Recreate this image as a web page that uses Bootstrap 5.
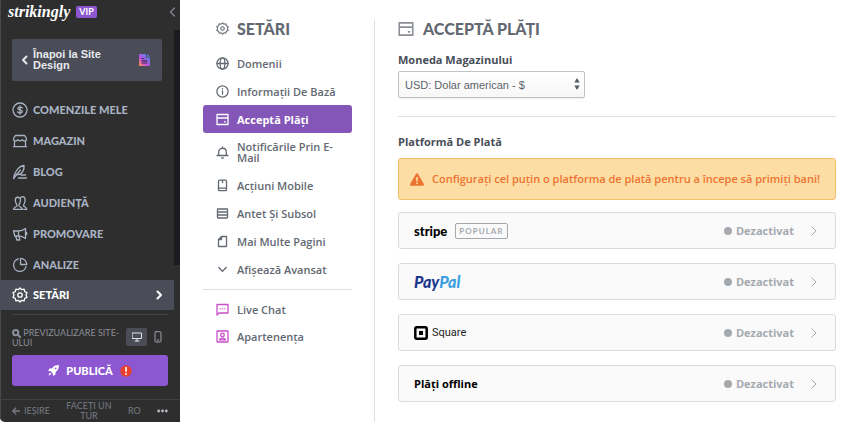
<!DOCTYPE html>
<html lang="ro">
<head>
<meta charset="utf-8">
<meta name="viewport" content="width=device-width, initial-scale=1">
<title>Setări – Acceptă plăți</title>
<link href="https://cdn.jsdelivr.net/npm/bootstrap@5.3.0/dist/css/bootstrap.min.css" rel="stylesheet">
<style>
body{font-family:"Open Sans","Noto Sans",sans-serif;font-size:11px;line-height:14px;color:#636972;background:#fff}
a{color:inherit;text-decoration:none}
svg{display:block;flex:none;fill:none;stroke:currentColor;stroke-width:1.3;stroke-linecap:round;stroke-linejoin:round}
.solid{stroke:none}
.heavy{stroke-width:2}
.thin{stroke-width:1}
.side{width:180px;background:#2e2e2e;color:#a9b3c3;font-family:Lato,sans-serif;border-bottom-left-radius:5px;box-shadow:inset 1px 0 #484848}
.brand{height:30px;padding:0 4px 6px 8px;gap:6px}
.brand svg{color:#858992}
.brand-name{font:italic bold 16px/20px "Liberation Serif",serif;color:#fff}
.vip{background:#8d57d1;color:#fff;font-size:9px;line-height:12px;font-weight:700;border-radius:2px;padding:0 3px}
.side-scroll{border-right:6px solid #1a1b1f;height:235px}
.back{margin:9px 12px 13px;width:150px;height:42px;background:#4a4d57;color:#e7e9ee;border:0;border-radius:2px;padding:0 12px 0 9px;font:bold 11px/11px "Liberation Sans",sans-serif;gap:5px}
.side-link{height:31px;padding-left:12px;gap:5px;font-size:11px;font-weight:900;width:174px}
.side-link.current{background:#4a4d57;color:#fff;height:30px;padding-right:11px}
.side-icon{width:16px;height:16px}
.preview{margin:0 12px;border-top:1px solid #41434a;padding-top:13px;height:41px;font-size:9px;line-height:10px;color:#8a8f9a}
.dev{border:0;background:none;color:#9ba0aa;width:21px;height:18px;padding:0;border-radius:2px}
.dev.on{background:#4a4d57;color:#e2e4e8}
.publish{margin:0 12px;width:156px;height:31px;background:#8d57d1;color:#fff;border:0;border-radius:3px;font-size:11px;font-weight:900;gap:7px}
.side-foot{margin-top:13px;border-top:1px solid #414141;height:23px;padding:0 12px;color:#777b84;font-size:9px;line-height:10px}
.menu{width:195px;margin-top:20px;padding:0 22px 0 23px;border-right:1px solid #dcdfe3}
.ttl{font-family:Lato,sans-serif;font-weight:900;font-size:16px;line-height:17px;color:#636972;margin:0}
.menu .ttl{padding-left:13px;gap:8px;margin-bottom:12px}
.main .ttl{gap:9px}
.menu-link{min-height:28px;padding:2px 13px;gap:8px;font-weight:600;line-height:11px}
.menu-extra .menu-link{min-height:27px}
.menu-link svg{width:13px;height:13px}
.menu-link.current{background:#8456b8;color:#fff;border-radius:3px;font-weight:700}
.rule{border:0;border-top:1px solid #dcdfe3;opacity:1;margin:0}
.menu .rule{margin:6px 0}
.pink{color:#c94fc8}
.main{padding:20px 19px 19px 23px;min-width:0}
.main .rule{margin:18px 0}
.lbl{font-weight:700;color:#484e58;font-size:11px;line-height:14px}
.money{width:187px;height:27px;border:1px solid #bfc3c8;border-radius:2px;background:linear-gradient(#fff,#f7f7f7);color:#5c626c;font:11px "Liberation Sans",sans-serif;padding:0 18px 0 6px;appearance:none;box-shadow:0 1px 1px #0001}
.money-arrows{position:absolute;right:5px;top:7px;pointer-events:none;stroke:none;fill:#555b65}
.warn{background:#fcdda4;border:1px solid #f5bd6b;border-radius:3px;color:#ed7430;min-height:42px;padding:0 11px;gap:8px;font-weight:600;margin-top:9px}
.providers{gap:14px;margin-top:12px}
.go{margin-left:17px;stroke-width:1}
.pay{height:37px;background:#fafafa;border:1px solid #dadbdd;border-radius:3px;padding:0 18px 0 15px;color:#a4a9af;font-weight:700}
.dot{width:8px;height:8px;border-radius:50%;background:#a4a9af}
.tag{border:1px solid #a4a9af;border-radius:2px;font-family:Lato,sans-serif;font-size:8px;letter-spacing:1px;line-height:14px;padding:0 3px}
.stripe{font:900 13px/16px Lato,sans-serif;color:#000}
.paypal{font:italic 900 16px/18px Lato,sans-serif;color:#1c388c}
.paypal span{color:#3d9fe0}
.square{font:11px/14px Roboto,sans-serif;color:#222}
.square-logo{stroke:#000}
</style>
</head>
<body>
<div class="d-flex min-vh-100">
<aside class="side d-flex flex-column flex-shrink-0">
  <div class="brand d-flex align-items-center">
    <span class="brand-name">strikingly</span><span class="vip">VIP</span>
    <svg class="ms-auto" width="7" height="10" viewBox="0 0 7 10"><path d="M5.500 1 1.500 5l4 4"/></svg>
  </div>
  <div class="side-scroll">
    <button class="back d-flex align-items-center text-start">
      <svg class="heavy" width="7" height="10" viewBox="0 0 7 10"><path d="M5.500 1.500 2 5l3.500 3.500"/></svg>
      <span>Înapoi la Site<br>Design</span>
      <svg class="ms-auto solid" width="11" height="12" viewBox="0 0 11 12"><defs><linearGradient id="pg" x1="0" y1="1" x2="1" y2="0"><stop offset="0" stop-color="#ff9345"/><stop offset=".4" stop-color="#c34de0"/><stop offset="1" stop-color="#2d9bf0"/></linearGradient></defs><path fill="url(#pg)" d="M0 0h7v3.700h4V12H0zM8 0l3 2.700H8z"/><path stroke="#3c3154" stroke-width="1.200" d="M3 4.500h2M3 6.800h5M3 9h5"/></svg>
    </button>
    <nav>
      <a href="#" class="side-link d-flex align-items-center"><svg class="side-icon" viewBox="0 0 16 16"><circle cx="8" cy="8" r="7"/><path d="M10.300 6C9.800 5 6 4.600 5.900 6.400 5.900 8.300 10.300 7.500 10.300 9.500c0 2-4 1.700-4.700.4M8 3.800v8.400"/></svg>COMENZILE MELE</a>
      <a href="#" class="side-link d-flex align-items-center"><svg class="side-icon" viewBox="0 0 16 16"><path d="M3.500 2.500h9c1.200 1 2 2.500 2 4.300-1.200 1.500-3 1.500-4.300 0-1.300 1.500-3 1.500-4.300 0-1.300 1.500-3.300 1.500-4.400 0 0-1.800.8-3.300 2-4.300zM2.500 8.500v5.200M13.500 8.500v5.200M1.500 13.700h13"/></svg>MAGAZIN</a>
      <a href="#" class="side-link d-flex align-items-center"><svg class="side-icon" viewBox="0 0 16 16"><path d="M1.500 14.500C2.500 8.500 6 2.500 12 1.500c.5 4-1.500 8-5 9.200l-3-.4M1.500 14.500 8.500 6M9 11h4.500M6.500 14h8"/></svg>BLOG</a>
      <a href="#" class="side-link d-flex align-items-center"><svg class="side-icon" viewBox="0 0 16 16"><path d="M1.500 14.300c0-2 3-2.500 3.500-3.300C5.400 9.600 3.300 8.500 3.300 5c0-3.600 5.200-3.700 5.200 0 0 3.500-2.200 4.500-1.500 6 .5 1 3.500 1.300 3.500 3.300zM8.500 2.600c2-2 4.700-.6 4.700 2.200 0 3.500-2 4.700-1.600 5.900.3 1 3 1.300 3.200 3.600h-3"/></svg>AUDIENȚĂ</a>
      <a href="#" class="side-link d-flex align-items-center"><svg class="side-icon" viewBox="0 0 16 16"><path d="M1.500 5h5c3 0 5-1 7-2.500v10C11.500 11 9.500 10 6.500 10H2.800zM6.500 5v5M3.700 10l1.100 4h3l-.9-3.800M14.600 6.500v2"/></svg>PROMOVARE</a>
      <a href="#" class="side-link d-flex align-items-center"><svg class="side-icon" viewBox="0 0 16 16"><path d="M6.300 2A6.300 6.300 0 1 0 14 9.700M8.500 1.300v6.200h6.200c0-3.500-2.700-6.200-6.200-6.200z"/></svg>ANALIZE</a>
      <a href="#" class="side-link current d-flex align-items-center" aria-current="page"><svg class="side-icon" viewBox="0 0 16 16"><path id="gear" d="M8 1l1.700 1.700 2.400-.5.600 2.400 2.300.9L14 8l1 2.500-2.300.9-.6 2.400-2.400-.5L8 15l-1.700-1.700-2.400.5-.6-2.400L1 10.500 2 8 1 5.500l2.300-.9.600-2.400 2.400.5z"/><circle cx="8" cy="8" r="2.200"/></svg>SETĂRI<svg class="ms-auto heavy" width="7" height="10" viewBox="0 0 7 10"><path d="M1.500 1.500 5 5 1.500 8.500"/></svg></a>
    </nav>
  </div>
  <div class="mt-auto">
  <div class="preview d-flex align-items-start">
    <span class="flex-grow-1"><svg class="d-inline-block heavy" width="9" height="9" viewBox="0 0 9 9"><circle cx="3.700" cy="3.700" r="2.600"/><path d="m6 6 2.300 2.300"/></svg> PREVIZUALIZARE SITE-ULUI</span>
    <button class="dev on d-flex align-items-center justify-content-center flex-shrink-0" aria-label="Desktop"><svg class="thin" width="10" height="10" viewBox="0 0 10 10"><path d="M.5 1h9v5.500h-9zM5 6.500V9M3 9h4"/></svg></button>
    <button class="dev d-flex align-items-center justify-content-center flex-shrink-0" aria-label="Mobil"><svg class="thin" width="8" height="12" viewBox="0 0 8 12"><rect x="1" y=".7" width="6" height="10.300" rx="1"/><path d="M3.300 9h1.400"/></svg></button>
  </div>
  <button class="publish d-flex align-items-center justify-content-center"><svg class="solid" width="11" height="11" viewBox="0 0 11 11"><path fill="#fff" d="M11 0C7.500 0 5.500 1.200 4.200 3.200L1.600 3.600 0 6l2.300.1 2.600 2.600L5 11l2.400-1.600.4-2.600C9.800 5.500 11 3.500 11 0zM1.700 7.500.5 10.500l3-1.200z"/><circle cx="7.600" cy="3.400" r=".9" fill="#8d57d1"/></svg>PUBLICĂ<svg class="solid" width="12" height="12" viewBox="0 0 12 12"><circle cx="6" cy="6" r="5.700" fill="#e8402c"/><path d="M5.200 2h1.600v4.800H5.200zM5.200 8h1.600v1.700H5.200z" fill="#fff"/></svg></button>
  <footer class="side-foot d-flex align-items-center justify-content-between text-center">
    <a href="#" class="d-flex align-items-center gap-1"><svg width="8" height="8" viewBox="0 0 8 8"><path d="M7.500 4H1M3.800 1 .8 4l3 3"/></svg>IEȘIRE</a>
    <a href="#">FACEȚI UN<br>TUR</a><a href="#">RO</a>
    <a href="#" aria-label="Mai multe"><svg class="solid" width="11" height="4" viewBox="0 0 11 4"><g fill="#b6bbc4"><circle cx="1.700" cy="2" r="1.400"/><circle cx="5.500" cy="2" r="1.400"/><circle cx="9.300" cy="2" r="1.400"/></g></svg></a>
  </footer>
  </div>
</aside>

<section class="menu flex-shrink-0">
  <h2 class="ttl d-flex align-items-center"><svg width="13" height="13" viewBox="0 0 16 16"><use href="#gear"/><circle cx="8" cy="8" r="2.200"/></svg>SETĂRI</h2>
  <nav>
    <a href="#" class="menu-link d-flex align-items-center"><svg viewBox="0 0 13 13"><circle cx="6.500" cy="6.500" r="5.600"/><ellipse cx="6.500" cy="6.500" rx="2.400" ry="5.600"/><path d="M1 6.500h11"/></svg>Domenii</a>
    <a href="#" class="menu-link d-flex align-items-center"><svg viewBox="0 0 13 13"><circle cx="6.500" cy="6.500" r="5.600"/><path d="M6.500 6v3.200M6.500 3.700v.2"/></svg>Informații De Bază</a>
    <a href="#" class="menu-link current d-flex align-items-center" aria-current="page"><svg viewBox="0 0 13 13"><path id="card" d="M1 1.500h11v10H1zM1 5h11M8.500 8.800h1"/></svg>Acceptă Plăți</a>
    <a href="#" class="menu-link d-flex align-items-center py-2"><svg viewBox="0 0 13 13"><path d="M1 9.500h11M2.700 9.500V6c0-5 7.600-5 7.600 0v3.500M6.500 2V1M5.700 12h1.600"/></svg><span>Notificările Prin E-Mail</span></a>
    <a href="#" class="menu-link d-flex align-items-center"><svg viewBox="0 0 13 13"><rect x="2.500" y="1.200" width="8" height="10.500" rx="1"/><path d="M2.500 9.200h8M6.500 1.500v2"/></svg>Acțiuni Mobile</a>
    <a href="#" class="menu-link d-flex align-items-center"><svg viewBox="0 0 13 13"><rect x="1.500" y="2" width="10" height="9" rx=".5"/><path d="M1.500 5h10M1.500 8h10"/></svg>Antet Și Subsol</a>
    <a href="#" class="menu-link d-flex align-items-center"><svg viewBox="0 0 13 13"><path d="M5.500 1.500h5v10h-8v-7zv3h-3"/></svg>Mai Multe Pagini</a>
    <a href="#" class="menu-link d-flex align-items-center"><svg viewBox="0 0 13 13"><path d="m2.800 4.500 3.700 3.700 3.700-3.700"/></svg>Afișează Avansat</a>
  </nav>
  <hr class="rule">
  <nav class="menu-extra">
    <a href="#" class="menu-link d-flex align-items-center"><svg class="pink" viewBox="0 0 13 13"><path d="M1 1.500h11v8.500H3L1 12zM4 5.800h.2M6.400 5.800h.2M8.800 5.800H9"/></svg>Live Chat</a>
    <a href="#" class="menu-link d-flex align-items-center"><svg class="pink" viewBox="0 0 13 13"><rect x="1" y="1" width="11" height="11" rx=".5"/><circle cx="6.500" cy="5" r="1.800"/><path d="M3.500 9.800c1-2.200 5-2.200 6 0z"/></svg>Apartenența</a>
  </nav>
</section>

<main class="main flex-grow-1">
  <h1 class="ttl d-flex align-items-center mb-3"><svg width="16" height="16" viewBox="0 0 13 13" class="opacity-75"><use href="#card"/></svg>ACCEPTĂ PLĂȚI</h1>
  <label class="lbl d-block mb-1" for="currency">Moneda Magazinului</label>
  <div class="position-relative d-inline-block align-top">
    <select class="money d-block" id="currency"><option>USD: Dolar american - $</option></select>
    <svg class="money-arrows" width="6" height="12" viewBox="0 0 6 12"><path d="M3 0 5.700 4.600H.3zM3 12 .3 7.400h5.400z"/></svg>
  </div>
  <hr class="rule">
  <h2 class="lbl m-0">Platformă De Plată</h2>
  <div class="warn d-flex align-items-center" role="alert"><svg class="solid" width="14" height="13" viewBox="0 0 14 13"><path fill="#ed7430" d="M6 .8a1.150 1.150 0 0 1 2 0l5.800 10.300a1.150 1.150 0 0 1-1 1.700H1.200a1.150 1.150 0 0 1-1-1.700z"/><path fill="#fcdda4" d="M6.200 4h1.600v4.500H6.200zM6.200 9.500h1.600v1.600H6.200z"/></svg>Configurați cel puțin o platforma de plată pentru a începe să primiți bani!</div>
  <div class="providers d-grid">
    <a href="#" class="pay d-flex align-items-center"><span class="stripe">stripe</span><span class="tag ms-2">POPULAR</span><span class="dot ms-auto me-1"></span>Dezactivat<svg class="go" width="6" height="10" viewBox="0 0 6 10"><path d="m.7.700 4.300 4.300L.7 9.300"/></svg></a>
    <a href="#" class="pay d-flex align-items-center"><span class="paypal">Pay<span>Pal</span></span><span class="dot ms-auto me-1"></span>Dezactivat<svg class="go" width="6" height="10" viewBox="0 0 6 10"><path d="m.7.700 4.300 4.300L.7 9.300"/></svg></a>
    <a href="#" class="pay d-flex align-items-center"><svg class="square-logo" width="14" height="14" viewBox="0 0 14 14"><rect x="1.300" y="1.300" width="11.400" height="11.400" rx="1.500" stroke-width="2.500"/><path stroke="none" fill="#000" d="M5 5h4v4H5z"/></svg><span class="square ms-1">Square</span><span class="dot ms-auto me-1"></span>Dezactivat<svg class="go" width="6" height="10" viewBox="0 0 6 10"><path d="m.7.700 4.300 4.300L.7 9.300"/></svg></a>
    <a href="#" class="pay d-flex align-items-center"><span class="text-black">Plăți offline</span><span class="dot ms-auto me-1"></span>Dezactivat<svg class="go" width="6" height="10" viewBox="0 0 6 10"><path d="m.7.700 4.300 4.300L.7 9.300"/></svg></a>
  </div>
</main>
</div>
<script src="https://cdn.jsdelivr.net/npm/bootstrap@5.3.0/dist/js/bootstrap.bundle.min.js"></script>
</body>
</html>
